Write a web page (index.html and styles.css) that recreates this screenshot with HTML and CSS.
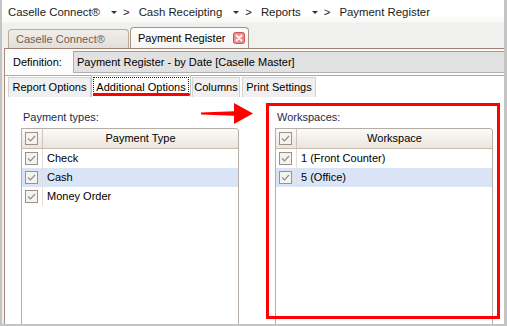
FILE: index.html
```html
<!DOCTYPE html>
<html>
<head>
<meta charset="utf-8">
<link rel="stylesheet" href="styles.css">
</head>
<body>
<div class="window">
  <div class="crumbs">
    <span class="crumb">Caselle Connect®</span><span class="caret"></span><span class="sep">&gt;</span>
    <span class="crumb">Cash Receipting</span><span class="caret"></span><span class="sep">&gt;</span>
    <span class="crumb">Reports</span><span class="caret"></span><span class="sep">&gt;</span>
    <span class="crumb">Payment Register</span>
  </div>
  <div class="doc-tabs">
    <div class="doc-tab">Caselle Connect®</div>
    <div class="doc-tab active"><span>Payment Register</span>
      <svg class="close" width="12" height="12" viewBox="0 0 12 12"><rect x="0.5" y="0.5" width="11" height="11" rx="2" fill="#ec8c8c" stroke="#cf5353"/><path d="M3.5 3.5 L8.5 8.5 M8.5 3.5 L3.5 8.5" stroke="#fff" stroke-width="1.8" stroke-linecap="round"/></svg>
    </div>
  </div>
  <div class="doc-body">
    <div class="def-row">
      <span class="def-label">Definition:</span>
      <div class="def-box">Payment Register - by Date [Caselle Master]</div>
    </div>
    <div class="sub-tabs">
      <div class="sub-tab w-report">Report Options</div>
      <div class="sub-tab selected w-add"><span class="focus">Additional Options</span></div>
      <div class="sub-tab w-cols">Columns</div>
      <div class="sub-tab w-print">Print Settings</div>
    </div>
    <div class="content">
      <section class="panel">
        <div class="panel-label">Payment types:</div>
        <div class="grid">
          <div class="grid-head">
            <div class="chk-cell"><svg width="13" height="13" viewBox="0 0 13 13"><rect x="0.5" y="0.5" width="12" height="12" fill="#f5f3f0" stroke="#9d9087"/><path d="M3 6.5 L5.5 9 L10 4" fill="none" stroke="#8e8e8e" stroke-width="1.2"/></svg></div>
            <div class="col-title">Payment Type</div>
          </div>
          <div class="grid-row">
            <div class="chk-cell"><svg width="13" height="13" viewBox="0 0 13 13"><rect x="0.5" y="0.5" width="12" height="12" fill="#f5f3f0" stroke="#9d9087"/><path d="M3 6.5 L5.5 9 L10 4" fill="none" stroke="#8e8e8e" stroke-width="1.2"/></svg></div>
            <div class="cell">Check</div>
          </div>
          <div class="grid-row current">
            <div class="chk-cell"><svg width="13" height="13" viewBox="0 0 13 13"><rect x="0.5" y="0.5" width="12" height="12" fill="#f5f3f0" stroke="#9d9087"/><path d="M3 6.5 L5.5 9 L10 4" fill="none" stroke="#8e8e8e" stroke-width="1.2"/></svg></div>
            <div class="cell">Cash</div>
          </div>
          <div class="grid-row">
            <div class="chk-cell"><svg width="13" height="13" viewBox="0 0 13 13"><rect x="0.5" y="0.5" width="12" height="12" fill="#f5f3f0" stroke="#9d9087"/><path d="M3 6.5 L5.5 9 L10 4" fill="none" stroke="#8e8e8e" stroke-width="1.2"/></svg></div>
            <div class="cell">Money Order</div>
          </div>
        </div>
      </section>
      <section class="panel">
        <div class="panel-label">Workspaces:</div>
        <div class="grid">
          <div class="grid-head">
            <div class="chk-cell"><svg width="13" height="13" viewBox="0 0 13 13"><rect x="0.5" y="0.5" width="12" height="12" fill="#f5f3f0" stroke="#9d9087"/><path d="M3 6.5 L5.5 9 L10 4" fill="none" stroke="#8e8e8e" stroke-width="1.2"/></svg></div>
            <div class="col-title">Workspace</div>
          </div>
          <div class="grid-row">
            <div class="chk-cell"><svg width="13" height="13" viewBox="0 0 13 13"><rect x="0.5" y="0.5" width="12" height="12" fill="#f5f3f0" stroke="#9d9087"/><path d="M3 6.5 L5.5 9 L10 4" fill="none" stroke="#8e8e8e" stroke-width="1.2"/></svg></div>
            <div class="cell">1 (Front Counter)</div>
          </div>
          <div class="grid-row current">
            <div class="chk-cell"><svg width="13" height="13" viewBox="0 0 13 13"><rect x="0.5" y="0.5" width="12" height="12" fill="#f5f3f0" stroke="#9d9087"/><path d="M3 6.5 L5.5 9 L10 4" fill="none" stroke="#8e8e8e" stroke-width="1.2"/></svg></div>
            <div class="cell">5 (Office)</div>
          </div>
        </div>
      </section>
    </div>
  </div>
  <div class="underline-mark"></div>
  <svg class="arrow-mark" width="54" height="22" viewBox="0 0 54 22"><polygon points="0,9.6 33,8.3 33,0 52,10.5 33,21 33,12.7 0,11.6" fill="#f00"/></svg>
  <div class="highlight-box"></div>
</div>
</body>
</html>
```

FILE: styles.css
```css
* { box-sizing: border-box; }
html, body { margin: 0; padding: 0; }
body {
  font-family: "Liberation Sans", Arial, sans-serif;
  font-size: 11px;
  color: #000;
  background: #fff;
}
.window {
  position: relative;
  width: 507px;
  height: 326px;
  border-left: 2px solid #c4c4c4;
  border-right: 3px solid #c4c4c4;
  border-bottom: 2px solid #c4c4c4;
  display: flex;
  flex-direction: column;
  overflow: hidden;
  background: #f0f0ef;
}
.crumbs {
  height: 23px;
  flex: none;
  display: flex;
  align-items: center;
  padding: 1px 0 1px 6px;
  font-size: 11.4px;
  color: #1a1a1a;
  background: linear-gradient(#ffffff 65%, #f6f6f5);
}
.caret {
  width: 0;
  height: 0;
  border-left: 3px solid transparent;
  border-right: 3px solid transparent;
  border-top: 3px solid #333;
  margin-left: 11px;
  margin-top: 1px;
}
.sep { margin: 0 9px 0 6px; }
.doc-tabs {
  height: 25px;
  flex: none;
  display: flex;
  align-items: flex-end;
  padding-left: 6px;
  gap: 1px;
}
.doc-tab {
  width: 121px;
  height: 19px;
  border: 1px solid #baa99c;
  border-bottom: none;
  border-radius: 4px 4px 0 0;
  background: linear-gradient(#f1eeea, #e3ded9);
  color: #6d5f56;
  padding-left: 7px;
  display: flex;
  align-items: center;
  padding-bottom: 1px;
}
.doc-tab.active {
  width: 119px;
  height: 21px;
  background: linear-gradient(#fdfdfd, #f5f5f5);
  border-color: #a99383;
  color: #000;
  justify-content: space-between;
  padding-right: 3px;
  padding-bottom: 0;
}
.doc-body {
  flex: 1;
  min-height: 0;
  display: flex;
  flex-direction: column;
  margin-left: 2px;
  border-left: 1px solid #a68d7d;
  border-top: 1px solid #9c7f6e;
  background: #fcfcfc;
}
.def-row {
  height: 27px;
  flex: none;
  display: flex;
  align-items: center;
  padding-left: 8px;
  border-bottom: 1px solid #aaaaaa;
}
.def-label { width: 60px; flex: none; }
.def-box {
  flex: 1;
  height: 22px;
  background: #e1e1e1;
  border: 1px solid #b0b0b0;
  border-top-color: #9c9c9c;
  border-right: none;
  padding-left: 3px;
  display: flex;
  align-items: center;
}
.sub-tabs {
  height: 21px;
  flex: none;
  display: flex;
  align-items: flex-end;
  padding-left: 3px;
  background: #fff;
}
.sub-tab {
  height: 20px;
  background: #f0f0f0;
  border: 1px solid #d2d2d2;
  border-bottom: none;
  display: flex;
  align-items: center;
  justify-content: center;
  padding-bottom: 1px;
}
.sub-tab.selected {
  height: 22px;
  background: #fff;
  border-color: #c4c4c4;
  padding: 1px;
}
.focus {
  flex: 1;
  align-self: stretch;
  display: flex;
  align-items: center;
  justify-content: center;
  border: 1px dotted #222;
  border-bottom: none;
}
.w-report { width: 83px; }
.w-add { width: 100px; }
.w-cols { width: 48px; margin-left: 1px; }
.w-print { width: 74px; margin-left: 2px; }
.content {
  flex: 1;
  min-height: 0;
  display: flex;
  gap: 36px;
  padding: 12px 0 0 16px;
  background: #fff;
}
.panel {
  width: 218px;
  display: flex;
  flex-direction: column;
}
.panel-label {
  line-height: 16px;
  padding-left: 2px;
  margin-bottom: 3px;
  color: #1c2a4c;
}
.grid {
  flex: 1;
  border: 1px solid #b6ada5;
  border-bottom: none;
  border-top-right-radius: 4px;
}
.grid-head {
  height: 20px;
  display: flex;
  background: linear-gradient(#fcfbf8, #ebe6dc);
  border-bottom: 1px solid #c6bdb0;
  border-top-right-radius: 3px;
}
.grid-head .chk-cell { border-right: 1px solid #cec5b9; }
.col-title {
  flex: 1;
  text-align: center;
  line-height: 19px;
}
.chk-cell {
  width: 21px;
  flex: none;
  display: flex;
  align-items: center;
  justify-content: center;
  padding-right: 1px;
  border-right: 1px solid #e3ded8;
}
.chk-cell svg { display: block; }
.grid-row {
  height: 19px;
  display: flex;
}
.grid-row.current { background: #d9e5f7; }
.cell {
  padding-left: 4px;
  line-height: 19px;
}
.underline-mark {
  position: absolute;
  left: 91px;
  top: 93px;
  width: 97px;
  height: 3px;
  border-radius: 1.5px;
  background: #f00;
}
.arrow-mark {
  position: absolute;
  left: 199px;
  top: 103px;
}
.highlight-box {
  position: absolute;
  left: 264px;
  top: 103px;
  width: 234px;
  height: 216px;
  border: 3px solid #f00;
}
```
